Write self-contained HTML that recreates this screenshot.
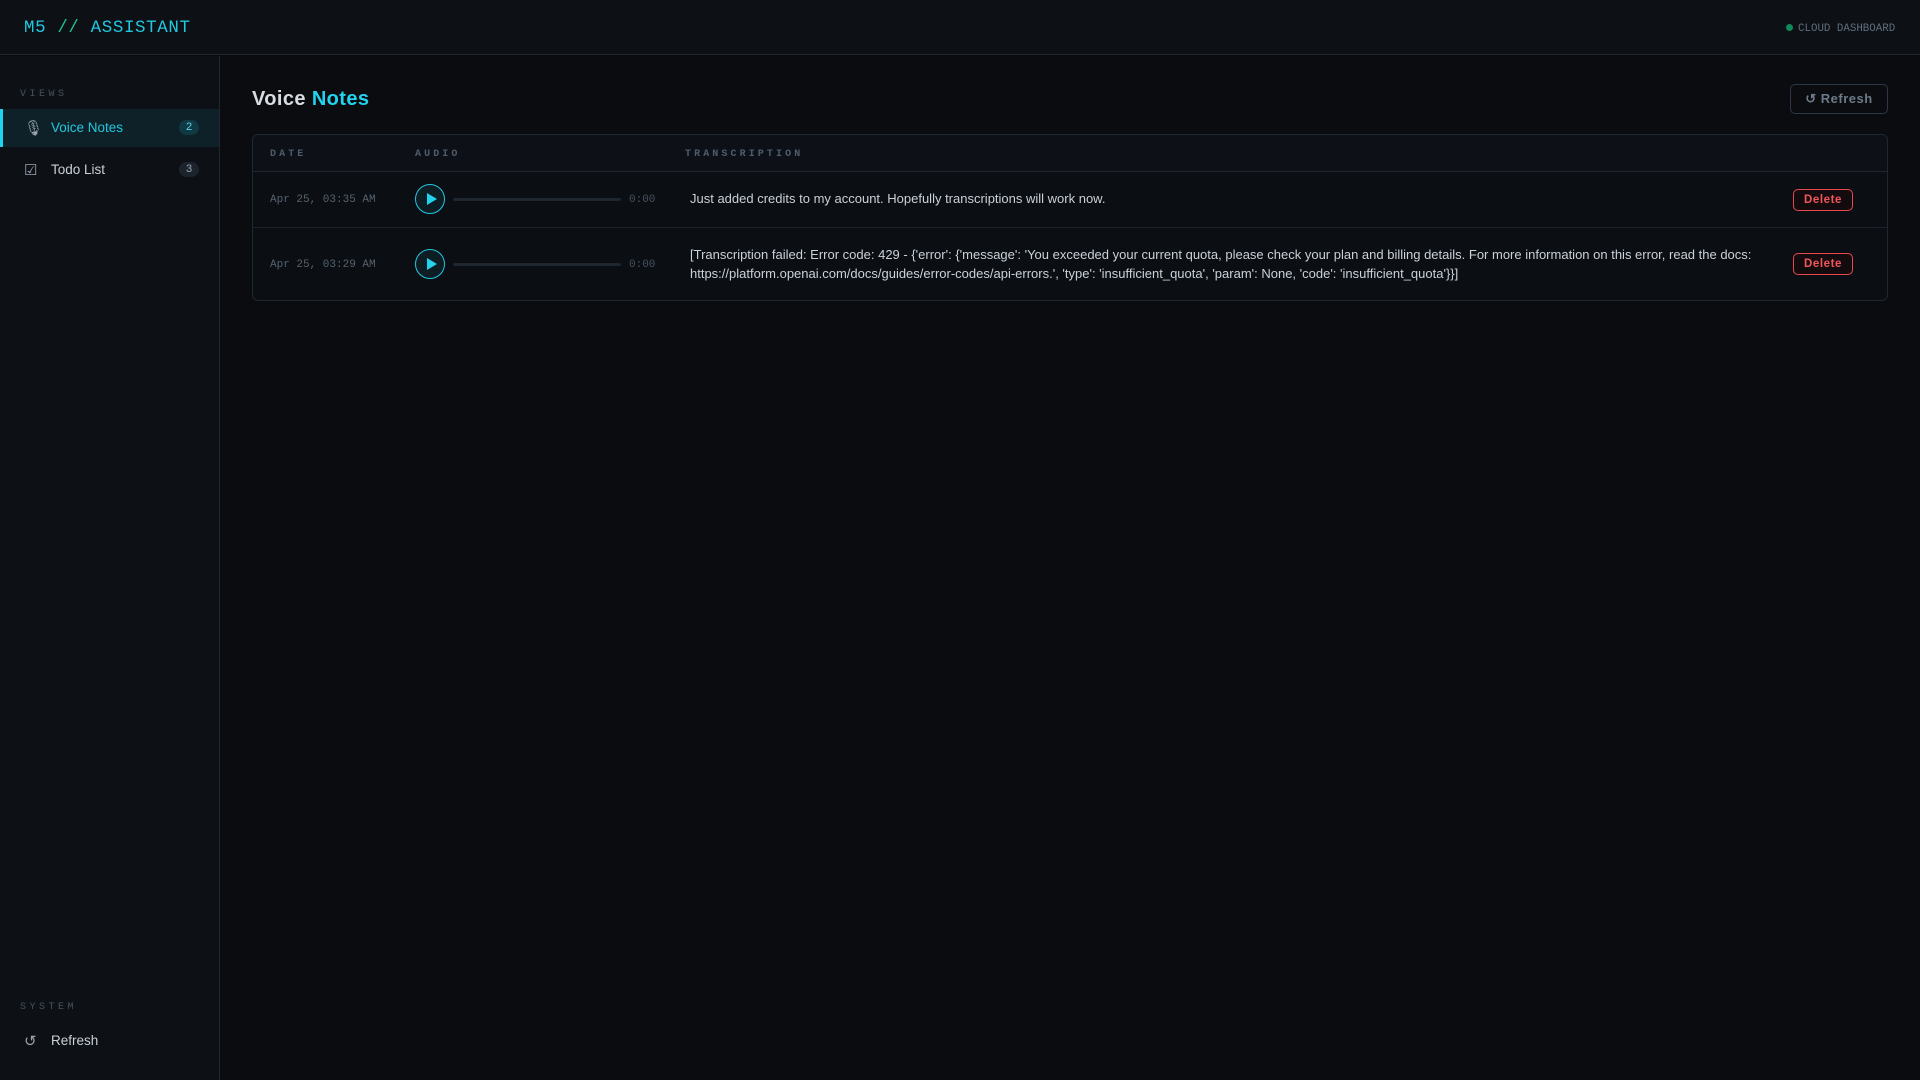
<!DOCTYPE html>
<html><head><meta charset="utf-8"><style>
*{box-sizing:border-box;margin:0;padding:0}
body{width:1920px;height:1080px;background:#0a0c10;font-family:"Liberation Sans",sans-serif;color:#c9d1d9;overflow:hidden;position:relative}
.mono{font-family:"Liberation Mono","DejaVu Sans Mono",monospace}
.hdr{position:absolute;left:0;top:0;width:1920px;height:55px;background:#0d1015;border-bottom:1px solid #1f2730}
.logo{position:absolute;left:24px;top:18px;font-size:17.5px;letter-spacing:0.6px;color:#22c7e0}
.logo span{color:#1fc48a}
.cloud{position:absolute;left:1786px;top:23px;font-size:10.8px;color:#5f6e7d}
.cloud i{display:inline-block;width:7px;height:7px;border-radius:50%;background:#0f8a5a;margin-right:5px;vertical-align:0}
.side{position:absolute;left:0;top:56px;width:220px;height:1024px;background:#0d1015;border-right:1px solid #1f2730}
.lbl{position:absolute;left:20px;font-size:10px;letter-spacing:3.5px;color:#45525f}
.item{position:absolute;left:0;width:219px;height:38px;font-size:13.5px;color:#c9d1d9}
.item .ic{position:absolute;left:24px;top:10px;font-size:15px;color:#9aa5b1}
.item .t{position:absolute;left:51px;top:11px}
.item .b{position:absolute;left:179px;top:11px;width:20px;height:15px;border-radius:8px;background:#1c232c;color:#9aa5b1;font-size:11px;text-align:center;line-height:15px}
.item.act{background:#0e2128;color:#22c7e0}
.item.act:before{content:"";position:absolute;left:0;top:0;width:3px;height:38px;background:#22d3ee}
.item.act .b{background:#0f3a44;color:#5fd5e6}
h1{position:absolute;left:252px;top:88px;font-size:20px;font-weight:bold;letter-spacing:.4px;color:#d6dce2}
h1 span{color:#22d3ee}
.rbtn{position:absolute;left:1790px;top:84px;width:98px;height:30px;border:1px solid #2c3845;border-radius:5px;font-size:13px;font-weight:bold;color:#6b7a89;text-align:center;line-height:28px;letter-spacing:.5px}
.tbl{position:absolute;left:252px;top:134px;width:1636px;height:167px;border:1px solid #1f2730;border-radius:6px;background:#0b0e13;overflow:hidden}
.th{position:absolute;top:0;left:0;width:100%;height:37px;background:#0d1117;border-bottom:1px solid #1f2730}
.th div{position:absolute;top:14px;font-size:10px;font-weight:bold;letter-spacing:3.1px;color:#4f5d6b}
.row{position:absolute;left:0;width:100%;border-bottom:1px solid #1b232c}
.date{position:absolute;left:17px;font-size:11px;color:#56636f}
.play{position:absolute;left:162px;width:30px;height:30px;border:1.5px solid #22c7e0;border-radius:50%;background:#0c1d24}
.play:after{content:"";position:absolute;left:11px;top:8px;border-left:10px solid #22d3ee;border-top:6px solid transparent;border-bottom:6px solid transparent}
.bar{position:absolute;left:200px;width:168px;height:3px;border-radius:2px;background:#1e262f}
.tm{position:absolute;left:376px;font-size:11px;color:#45525f}
.tx{position:absolute;left:437px;width:1100px;font-size:13px;line-height:18.5px;color:#c9d1d9}
.del{position:absolute;left:1540px;width:60px;height:22px;border:1px solid #e5484d;border-radius:5px;color:#f2555a;font-size:11.5px;font-weight:bold;text-align:center;line-height:20px;letter-spacing:.6px;background:#140b0e}
</style></head><body>
<div class="hdr"><div class="logo mono">M5 <span>//</span> ASSISTANT</div>
<div class="cloud mono"><i></i>CLOUD DASHBOARD</div></div>
<div class="side">
<div class="lbl mono" style="top:33px">VIEWS</div>
<div class="item act" style="top:53px"><span class="ic">🎙</span><span class="t">Voice Notes</span><span class="b">2</span></div>
<div class="item" style="top:95px"><span class="ic">☑</span><span class="t">Todo List</span><span class="b">3</span></div>
<div class="lbl mono" style="top:946px">SYSTEM</div>
<div class="item" style="top:966px"><span class="ic">↺</span><span class="t">Refresh</span></div>
</div>
<h1>Voice <span>Notes</span></h1>
<div class="rbtn">↺ Refresh</div>
<div class="tbl">
<div class="th mono"><div style="left:17px">DATE</div><div style="left:162px">AUDIO</div><div style="left:432px">TRANSCRIPTION</div></div>
<div class="row" style="top:37px;height:56px">
<div class="date mono" style="top:22px">Apr 25, 03:35 AM</div>
<div class="play" style="top:12px"></div><div class="bar" style="top:26px"></div>
<div class="tm mono" style="top:22px">0:00</div>
<div class="tx" style="top:18px">Just added credits to my account. Hopefully transcriptions will work now.</div>
<div class="del" style="top:17px">Delete</div></div>
<div class="row" style="top:93px;height:74px;border-bottom:none">
<div class="date mono" style="top:31px">Apr 25, 03:29 AM</div>
<div class="play" style="top:21px"></div><div class="bar" style="top:35px"></div>
<div class="tm mono" style="top:31px">0:00</div>
<div class="tx" style="top:18px">[Transcription failed: Error code: 429 - {'error': {'message': 'You exceeded your current quota, please check your plan and billing details. For more information on this error, read the docs: https://platform.openai.com/docs/guides/error-codes/api-errors.', 'type': 'insufficient_quota', 'param': None, 'code': 'insufficient_quota'}}]</div>
<div class="del" style="top:25px">Delete</div></div>
</div>
</body></html>
